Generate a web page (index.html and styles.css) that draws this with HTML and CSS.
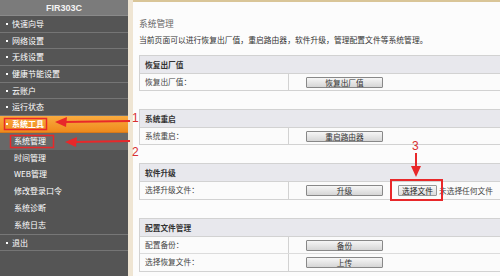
FILE: index.html
```html
<!DOCTYPE html>
<html lang="zh-CN">
<head>
    <meta charset="UTF-8">
    <title>FIR303C 系统管理</title>
    <link rel="stylesheet" href="styles.css">
</head>
<body>

<div class="page">
    <div class="sidebar">
        <div class="brand">FIR303C</div>
        <div class="menu-item">快速向导</div>
        <div class="menu-item">网络设置</div>
        <div class="menu-item">无线设置</div>
        <div class="menu-item">健康节能设置</div>
        <div class="menu-item">云账户</div>
        <div class="menu-item">运行状态</div>
        <div class="menu-item active">系统工具</div>
        <div class="submenu">
            <div class="sub-item current">系统管理</div>
            <div class="sub-item">时间管理</div>
            <div class="sub-item">WEB管理</div>
            <div class="sub-item">修改登录口令</div>
            <div class="sub-item">系统诊断</div>
            <div class="sub-item">系统日志</div>
        </div>
        <div class="menu-item">退出</div>
    </div>

    <div class="strip"></div>

    <div class="main">
        <div class="title">系统管理</div>
        <div class="desc">当前页面可以进行恢复出厂值，重启路由器，软件升级，管理配置文件等系统管理。</div>

        <div class="box">
            <div class="box-head">恢复出厂值</div>
            <div class="row">
                <div class="label">恢复出厂值：</div>
                <div class="value"><button class="btn">恢复出厂值</button></div>
            </div>
        </div>

        <div class="box">
            <div class="box-head">系统重启</div>
            <div class="row">
                <div class="label">系统重启：</div>
                <div class="value"><button class="btn">重启路由器</button></div>
            </div>
        </div>

        <div class="box">
            <div class="box-head">软件升级</div>
            <div class="row tall">
                <div class="label">选择升级文件：</div>
                <div class="value">
                    <button class="btn">升级</button>
                    <button class="file-btn">选择文件</button>
                    <span class="file-name">未选择任何文件</span>
                </div>
            </div>
        </div>

        <div class="box">
            <div class="box-head">配置文件管理</div>
            <div class="row">
                <div class="label">配置备份：</div>
                <div class="value"><button class="btn">备份</button></div>
            </div>
            <div class="row tall">
                <div class="label">选择恢复文件：</div>
                <div class="value"><button class="btn">上传</button></div>
            </div>
        </div>
    </div>

    <!-- red marks drawn over the screenshot -->
    <svg class="marks" width="500" height="276" viewBox="0 0 500 276">
        <rect x="4.5" y="118.5" width="42" height="11" fill="none" stroke="#e8282a" stroke-width="1.5"/>
        <rect x="10.5" y="135.5" width="43" height="12" fill="none" stroke="#e8282a" stroke-width="1.5"/>
        <rect x="391" y="180" width="51" height="20" fill="none" stroke="#e8282a" stroke-width="2"/>

        <line x1="64" y1="122" x2="130" y2="121" stroke="#e8282a" stroke-width="2"/>
        <polygon points="55,122 67,117 66,127" fill="#e8282a"/>
        <line x1="74" y1="142" x2="130" y2="141" stroke="#e8282a" stroke-width="2"/>
        <polygon points="65,142 77,137 76,147" fill="#e8282a"/>
        <line x1="416" y1="153" x2="416" y2="168" stroke="#e8282a" stroke-width="2"/>
        <polygon points="416,177 411,166 421,166" fill="#e8282a"/>

        <text x="132" y="122" class="mark-num">1</text>
        <text x="132" y="156" class="mark-num">2</text>
        <text x="412" y="150" class="mark-num">3</text>
    </svg>
</div>

</body>
</html>
```

FILE: styles.css
```css
body {
    margin: 0;
    font-family: "Noto Sans CJK SC", "Noto Sans", sans-serif;
    background: #fff;
}
.page {
    position: relative;
    display: flex;
    width: 500px;
    height: 276px;
    overflow: hidden;
}
.sidebar {
    width: 128px;
    flex-shrink: 0;
    background: #555;
    color: #fff;
    font-size: 8px;
}
.brand {
    height: 16px;
    line-height: 16px;
    text-align: center;
    background: #7b7b7b;
    font-family: "Liberation Sans", Arial, sans-serif;
    font-weight: bold;
    font-size: 9px;
    color: #f4f4f4;
    border-bottom: 1px solid #8a8a8a;
    box-sizing: border-box;
}
.menu-item {
    height: 16.7px;
    line-height: 15.7px;
    box-sizing: border-box;
    padding-left: 12px;
    position: relative;
    border-bottom: 1px solid #757575;
    background: #555;
}
.menu-item::before {
    content: "";
    position: absolute;
    left: 6px;
    top: 7px;
    width: 2px;
    height: 2px;
    background: #fff;
}
.menu-item.active {
    background: linear-gradient(#f9ab3f, #ef8a1c);
    font-weight: bold;
    border-bottom: 1px solid #d8791a;
}
.submenu {
    background: #545454;
    border-bottom: 1px solid #777;
}
.sub-item {
    height: 16.8px;
    line-height: 16.8px;
    padding-left: 14px;
}
.sub-item.current {
    background: #686868;
}
.strip {
    width: 5px;
    flex-shrink: 0;
    background: #efe5d3;
}
.main {
    flex: 1;
    background: #fcfcfc;
    border-top: 2px solid #d9c598;
    padding: 0 0 0 6px;
    color: #555;
    font-size: 7.7px;
    min-width: 0;
}
.title {
    margin-top: 14px;
    height: 16px;
    line-height: 16px;
    font-size: 8.7px;
    color: #666;
}
.desc {
    height: 16px;
    line-height: 16px;
    font-size: 7.8px;
    color: #333;
    white-space: nowrap;
}
.box {
    width: 380px;
    margin-top: 7px;
    margin-bottom: 18px;
    border: 1px solid #d2d2d2;
    background: #fbfbfb;
}
.box-head {
    height: 17px;
    line-height: 17px;
    padding-left: 5px;
    background: #e8e8ed;
    border-bottom: 1px solid #d2d2d2;
    font-weight: bold;
    color: #333;
}
.row {
    display: flex;
    height: 16px;
    border-bottom: 1px solid #dcdcdc;
}
.row.tall {
    height: 17px;
}
.row:last-child {
    border-bottom: none;
}
.label {
    width: 143px;
    padding-left: 5px;
    line-height: 16px;
    border-right: 1px solid #d2d2d2;
    color: #444;
}
.value {
    flex: 1;
    display: flex;
    align-items: center;
    padding-left: 17px;
}
.btn {
    width: 77px;
    height: 11px;
    padding: 0;
    border: 1px solid #888;
    border-radius: 1px;
    background: linear-gradient(#f6f6f6, #d6d6d6);
    font-family: inherit;
    font-size: 7.7px;
    line-height: 9px;
    color: #333;
}
.file-btn {
    margin-left: 15px;
    width: 39px;
    height: 11px;
    padding: 0;
    border: 1px solid #999;
    border-radius: 1px;
    background: linear-gradient(#f8f8f8, #dcdcdc);
    font-family: inherit;
    font-size: 7.7px;
    line-height: 9px;
    color: #222;
}
.file-name {
    margin-left: 2px;
    color: #444;
    white-space: nowrap;
}
.marks {
    position: absolute;
    left: 0;
    top: 0;
    pointer-events: none;
}
.mark-num {
    font-family: "Liberation Sans", Arial, sans-serif;
    font-size: 12px;
    fill: #d83030;
}
```
